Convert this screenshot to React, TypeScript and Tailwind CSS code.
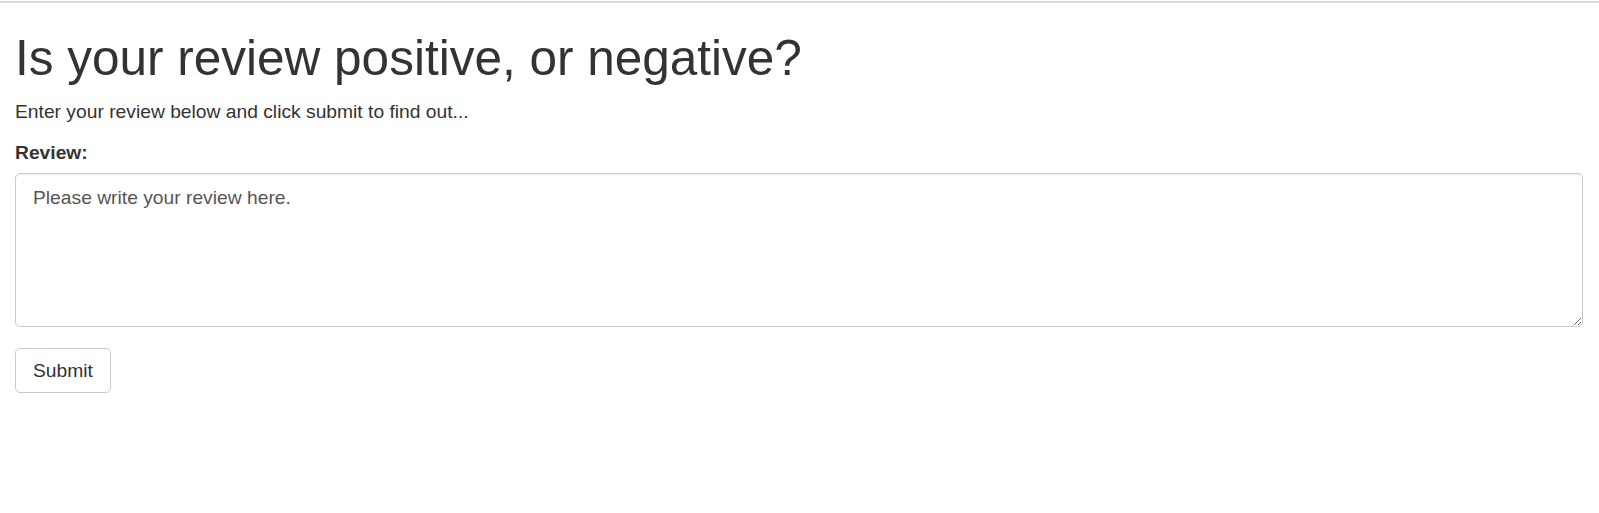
export default function App() {
  return (
    <div className="min-h-screen bg-white font-['Liberation_Sans',Arial,sans-serif] text-[19.25px] leading-[27px] text-[#333]">
      <div className="mt-[1px] h-[2px] bg-[#dadadd]" />
      <div className="pl-[15px] pr-[16px]">
        <h1 className="mt-[28px] mb-[12px] text-[49.5px] leading-[54.5px] font-normal">
          Is your review positive, or negative?
        </h1>
        <p className="mb-[14px]">Enter your review below and click submit to find out...</p>
        <form onSubmit={(e) => e.preventDefault()}>
          <label htmlFor="review" className="mb-[7px] block font-bold">
            Review:
          </label>
          <textarea
            id="review"
            placeholder="Please write your review here."
            className="block h-[154px] w-full rounded-[5px] border border-[#ccc] px-[17px] pt-[10px] pb-[8px] text-[#555] shadow-[inset_0_1px_1px_rgba(0,0,0,0.075)] outline-none placeholder:text-[#555]"
          />
          <button
            type="submit"
            className="mt-[21px] h-[45px] rounded-[5px] border border-[#ccc] bg-white px-[17px] text-[#333]"
          >
            Submit
          </button>
        </form>
      </div>
    </div>
  );
}
